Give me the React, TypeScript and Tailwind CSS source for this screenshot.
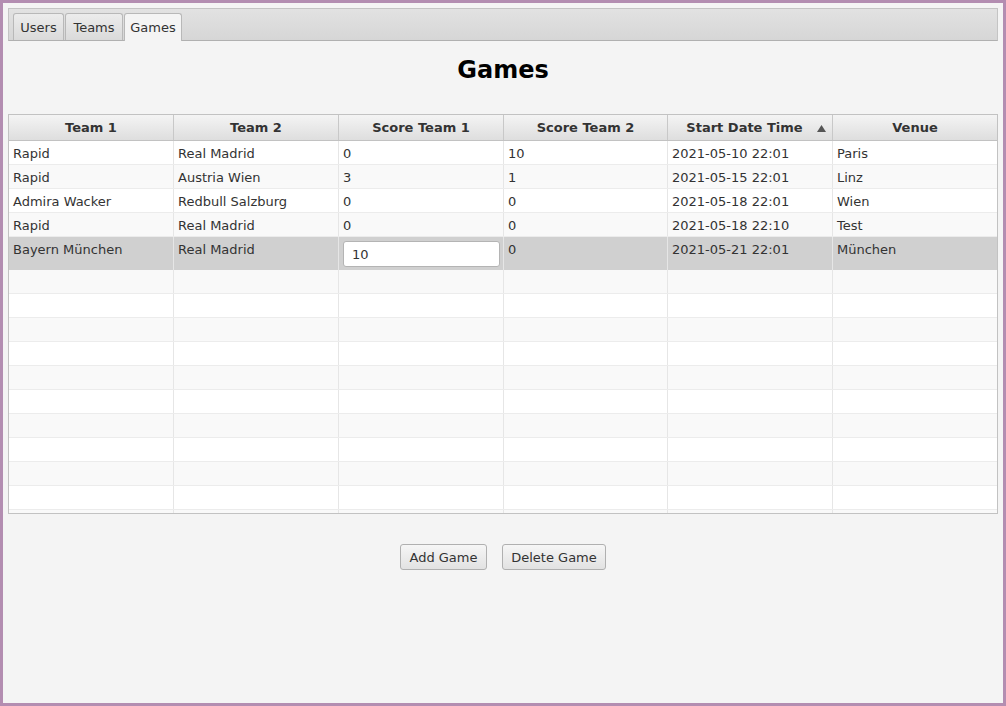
import React from "react";

interface Game {
  team1: string;
  team2: string;
  score1: string;
  score2: string;
  start: string;
  venue: string;
}

const games: Game[] = [
  { team1: "Rapid", team2: "Real Madrid", score1: "0", score2: "10", start: "2021-05-10 22:01", venue: "Paris" },
  { team1: "Rapid", team2: "Austria Wien", score1: "3", score2: "1", start: "2021-05-15 22:01", venue: "Linz" },
  { team1: "Admira Wacker", team2: "Redbull Salzburg", score1: "0", score2: "0", start: "2021-05-18 22:01", venue: "Wien" },
  { team1: "Rapid", team2: "Real Madrid", score1: "0", score2: "0", start: "2021-05-18 22:10", venue: "Test" },
];

const columns = ["Team 1", "Team 2", "Score Team 1", "Score Team 2", "Start Date Time", "Venue"];

const font = { fontFamily: "'DejaVu Sans', Verdana, sans-serif" };

const grid = "grid grid-cols-[165px_165px_165px_164px_165px_1fr]";

const Cell = ({ children, last }: { children?: React.ReactNode; last?: boolean }) => (
  <div
    className={`h-full pl-[4px] pr-1 pt-px truncate leading-[24px] ${last ? "" : "border-r border-[#e6e6e6]"}`}
  >
    {children}
  </div>
);

export default function App() {
  return (
    <div
      className="w-[1006px] h-[706px] border-[3px] border-[#b38db1] bg-[#f4f4f4] text-[13px] text-[#333] flex flex-col"
      style={font}
    >
      {/* tab header */}
      <div className="mx-[5px] mt-[5px] h-[33px] border border-[#c4c4c4] border-b-[#b0b0b0] bg-gradient-to-b from-[#e2e2e2] to-[#d6d6d6] flex items-end pl-[4px] gap-[1px]">
        <div className="w-[51px] h-[27px] pt-px flex items-center justify-center border border-b-0 border-[#b8b8b8] rounded-t-[3px] bg-gradient-to-b from-[#ececec] to-[#dadada]">
          Users
        </div>
        <div className="w-[58px] h-[27px] pt-px flex items-center justify-center border border-b-0 border-[#b8b8b8] rounded-t-[3px] bg-gradient-to-b from-[#ececec] to-[#dadada]">
          Teams
        </div>
        <div className="w-[58px] h-[28px] -mb-px pt-px flex items-center justify-center border border-b-0 border-[#b8b8b8] rounded-t-[3px] bg-[#f4f4f4]">
          Games
        </div>
      </div>

      {/* title */}
      <div className="mt-[15px] h-[28px] leading-[28px] text-center text-[24px] font-bold text-black">Games</div>

      {/* table */}
      <div className="mx-[5px] mt-[30px] h-[400px] border border-[#c2c2c2] bg-white overflow-hidden flex flex-col">
        <div className={`h-[26px] shrink-0 ${grid} border-b border-[#c2c2c2] bg-gradient-to-b from-[#f4f4f4] to-[#dedede] font-bold`}>
          {columns.map((c, i) => (
            <div
              key={c}
              className={`flex items-center justify-center pt-px gap-[14px] ${i < 5 ? "border-r border-[#c8c8c8]" : ""} ${i === 4 ? "pl-[12px]" : ""}`}
            >
              <span>{c}</span>
              {i === 4 && (
                <svg width="9" height="7" viewBox="0 0 9 7">
                  <path d="M4.5 0 L9 7 L0 7 Z" fill="#555" />
                </svg>
              )}
            </div>
          ))}
        </div>

        {games.map((g, i) => (
          <div
            key={i}
            className={`h-[24px] shrink-0 ${grid} border-b border-[#ececec] ${i % 2 === 0 ? "bg-white" : "bg-[#f9f9f9]"}`}
          >
            <Cell>{g.team1}</Cell>
            <Cell>{g.team2}</Cell>
            <Cell>{g.score1}</Cell>
            <Cell>{g.score2}</Cell>
            <Cell>{g.start}</Cell>
            <Cell last>{g.venue}</Cell>
          </div>
        ))}

        {/* row being edited */}
        <div className={`h-[33px] shrink-0 ${grid} bg-[#d0d0d0]`}>
          <Cell>Bayern München</Cell>
          <Cell>Real Madrid</Cell>
          <div className="h-full border-r border-[#e6e6e6] pl-[4px] pr-[3px] pt-[4px]">
            <div className="h-[26px] bg-white border border-[#b4b4b4] rounded-[3px] pl-[8px] pt-px flex items-center">
              10
            </div>
          </div>
          <Cell>0</Cell>
          <Cell>2021-05-21 22:01</Cell>
          <Cell last>München</Cell>
        </div>

        {Array.from({ length: 11 }).map((_, i) => (
          <div
            key={`e${i}`}
            className={`h-[24px] shrink-0 ${grid} border-b border-[#ececec] ${i % 2 === 0 ? "bg-[#f9f9f9]" : "bg-white"}`}
          >
            <Cell />
            <Cell />
            <Cell />
            <Cell />
            <Cell />
            <Cell last />
          </div>
        ))}
      </div>

      {/* buttons */}
      <div className="mt-[30px] flex justify-center gap-[15px]">
        <button className="h-[26px] w-[87px] pt-px border border-[#b0b0b0] rounded-[3px] bg-gradient-to-b from-[#f6f6f6] to-[#e2e2e2] text-[#333]">
          Add Game
        </button>
        <button className="h-[26px] w-[104px] pt-px border border-[#b0b0b0] rounded-[3px] bg-gradient-to-b from-[#f6f6f6] to-[#e2e2e2] text-[#333]">
          Delete Game
        </button>
      </div>
    </div>
  );
}
